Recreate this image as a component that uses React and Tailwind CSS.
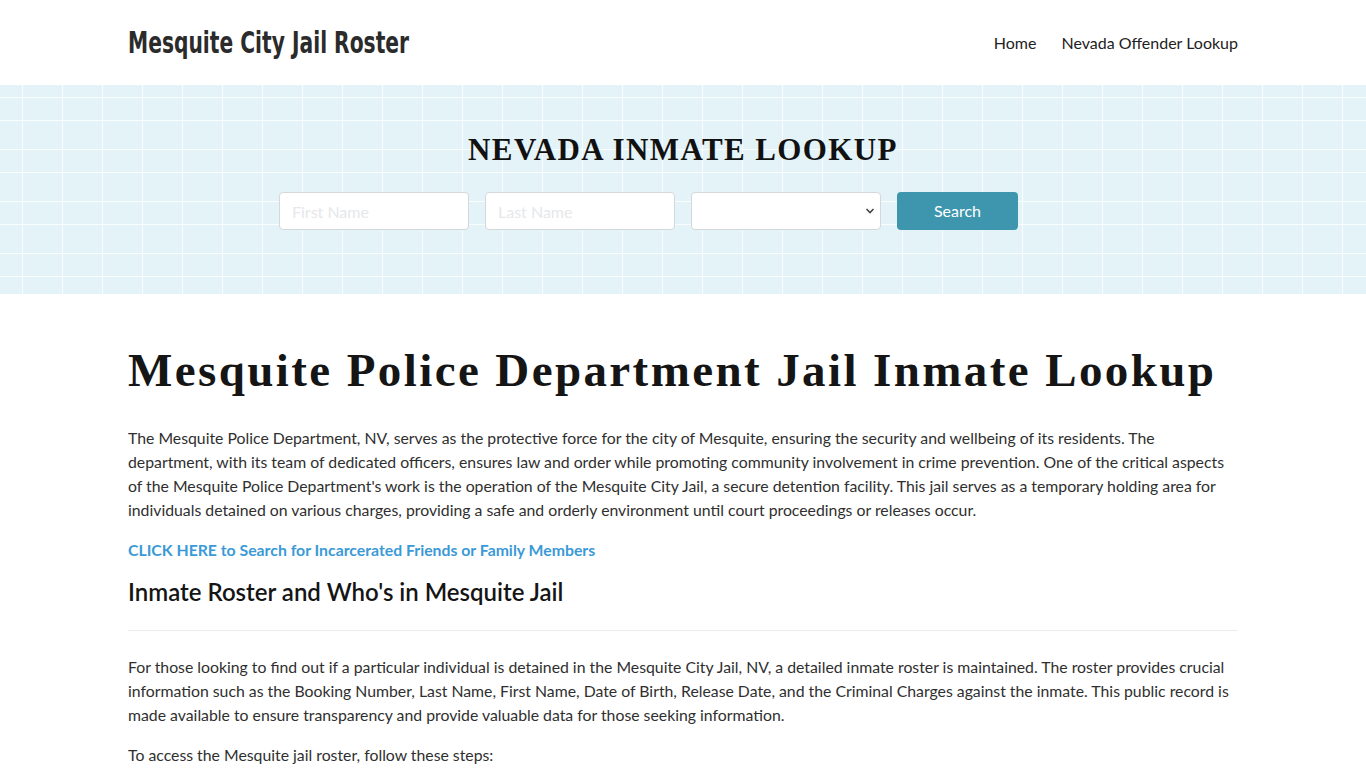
import React from "react";

export default function App() {
  return (
    <div className="min-h-screen bg-white font-['Lato','Noto_Sans',sans-serif] text-[#2f2f2f]">
      <header className="h-[85px]">
        <div className="mx-auto flex h-full w-[1110px] items-center justify-between">
          <a className="inline-block origin-left scale-x-[0.675] whitespace-nowrap font-['DejaVu_Sans',sans-serif] text-[30px] font-bold tracking-[0px] text-[#2b2b2b]">
            Mesquite City Jail Roster
          </a>
          <nav className="flex items-center gap-[25px] text-[16px] text-[#222]">
            <a>Home</a>
            <a>Nevada Offender Lookup</a>
          </nav>
        </div>
      </header>

      <section className="h-[209px] bg-[#e3f3f7] bg-[linear-gradient(to_right,rgba(255,255,255,0.8)_1.5px,transparent_1.5px),linear-gradient(to_bottom,rgba(255,255,255,0.8)_1.5px,transparent_1.5px,transparent_23px,rgba(255,255,255,0.8)_23px,rgba(255,255,255,0.8)_24.5px,transparent_24.5px)] bg-size-[40px_52px] bg-position-[22px_12px]">
        <div className="mx-auto w-[1110px] pt-[46px]">
          <h2 className="text-center font-['Liberation_Serif',serif] text-[31px] font-bold leading-[38px] tracking-[1.4px] text-[#111]">
            NEVADA INMATE LOOKUP
          </h2>
          <form className="mt-[23px] flex gap-[16px] pl-[151px]">
            <input
              placeholder="First Name"
              className="h-[38px] w-[190px] rounded-[4px] border border-[#d5d8da] bg-white px-[12px] text-[16px] placeholder:text-[#e6e8ea] outline-none"
            />
            <input
              placeholder="Last Name"
              className="h-[38px] w-[190px] rounded-[4px] border border-[#d5d8da] bg-white px-[12px] text-[16px] placeholder:text-[#e6e8ea] outline-none"
            />
            <div className="relative h-[38px] w-[190px] rounded-[4px] border border-[#d5d8da] bg-white">
              <svg className="absolute right-[5px] top-[14px]" width="10" height="8" viewBox="0 0 10 8">
                <path d="M1.5 2 L5 5.5 L8.5 2" fill="none" stroke="#444" strokeWidth="1.6" />
              </svg>
            </div>
            <button
              type="button"
              className="h-[38px] w-[121px] rounded-[4px] bg-[#3e96ae] text-[16px] text-white"
            >
              Search
            </button>
          </form>
        </div>
      </section>

      <main className="mx-auto w-[1110px] pt-[48px]">
        <h1 className="font-['Liberation_Serif',serif] text-[47px] font-bold leading-[56px] tracking-[2.4px] text-[#151515]">
          Mesquite Police Department Jail Inmate Lookup
        </h1>
        <p className="mt-[28px] text-[15.8px] leading-[24px]">
          The Mesquite Police Department, NV, serves as the protective force for the city of Mesquite, ensuring the security and wellbeing of its residents. The department, with its team of dedicated officers, ensures law and order while promoting community involvement in crime prevention. One of the critical aspects of the Mesquite Police Department's work is the operation of the Mesquite City Jail, a secure detention facility. This jail serves as a temporary holding area for individuals detained on various charges, providing a safe and orderly environment until court proceedings or releases occur.
        </p>
        <p className="mt-[16px] text-[15.8px] font-bold leading-[24px] text-[#3b9ad6]">
          <a>CLICK HERE to Search for Incarcerated Friends or Family Members</a>
        </p>
        <h2 className="mt-[14px] text-[24px] font-semibold leading-[32px] text-[#151515]">
          Inmate Roster and Who's in Mesquite Jail
        </h2>
        <hr className="mt-[22px] border-0 border-t border-[#ececec]" />
        <p className="mt-[24px] text-[15.8px] leading-[24px]">
          For those looking to find out if a particular individual is detained in the Mesquite City Jail, NV, a detailed inmate roster is maintained. The roster provides crucial information such as the Booking Number, Last Name, First Name, Date of Birth, Release Date, and the Criminal Charges against the inmate. This public record is made available to ensure transparency and provide valuable data for those seeking information.
        </p>
        <p className="mt-[16px] text-[15.8px] leading-[24px]">
          To access the Mesquite jail roster, follow these steps:
        </p>
      </main>
    </div>
  );
}
